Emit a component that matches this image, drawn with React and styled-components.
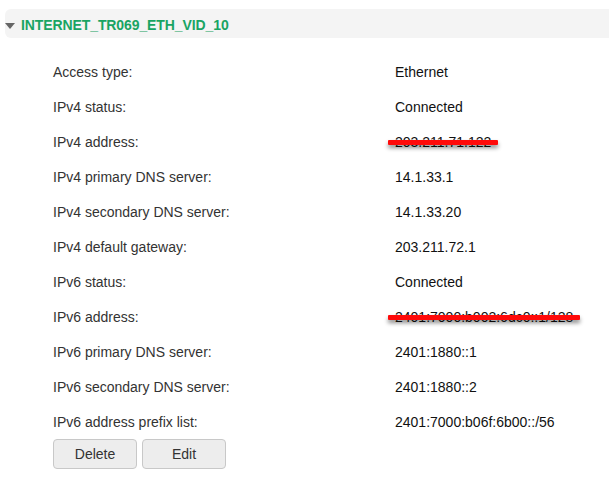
import React from 'react';
import styled, { createGlobalStyle } from 'styled-components';

const GlobalStyle = createGlobalStyle`
  body {
    margin: 0;
    background: #fff;
    font-family: "Liberation Sans", Arial, Helvetica, sans-serif;
    color: #222;
  }
`;

const rows = [
  { label: 'Access type:', value: 'Ethernet' },
  { label: 'IPv4 status:', value: 'Connected' },
  { label: 'IPv4 address:', value: '203.211.71.122', redacted: true },
  { label: 'IPv4 primary DNS server:', value: '14.1.33.1' },
  { label: 'IPv4 secondary DNS server:', value: '14.1.33.20' },
  { label: 'IPv4 default gateway:', value: '203.211.72.1' },
  { label: 'IPv6 status:', value: 'Connected' },
  { label: 'IPv6 address:', value: '2401:7000:b002:6dc0::1/128', redacted: true },
  { label: 'IPv6 primary DNS server:', value: '2401:1880::1' },
  { label: 'IPv6 secondary DNS server:', value: '2401:1880::2' },
  { label: 'IPv6 address prefix list:', value: '2401:7000:b06f:6b00::/56' },
];

function App() {
  return (
    <Page>
      <GlobalStyle />
      <Header>
        <Caret />
        <Title>INTERNET_TR069_ETH_VID_10</Title>
      </Header>
      <Details>
        {rows.map((row) => (
          <Row key={row.label}>
            <Label>{row.label}</Label>
            <Value $redacted={row.redacted}>{row.value}</Value>
          </Row>
        ))}
        <Actions>
          <Button>Delete</Button>
          <Button>Edit</Button>
        </Actions>
      </Details>
    </Page>
  );
}

export default App;

const Page = styled.div`
  width: 609px;
  height: 479px;
  overflow: hidden;
  padding-top: 9px;
  box-sizing: border-box;
`;

const Header = styled.div`
  margin-left: 5px;
  height: 29px;
  background: #f4f4f4;
  border-radius: 6px 0 0 6px;
  display: flex;
  align-items: center;
`;

const Caret = styled.span`
  width: 0;
  height: 0;
  border-left: 5.5px solid transparent;
  border-right: 5.5px solid transparent;
  border-top: 6px solid #666;
  margin: 4px 6px 0 0;
`;

const Title = styled.span`
  font-size: 14px;
  font-weight: bold;
  color: #19a463;
  letter-spacing: -0.1px;
  padding-top: 2px;
`;

const Details = styled.div`
  padding: 16px 0 0 53px;
`;

const Row = styled.div`
  display: grid;
  grid-template-columns: 342px 1fr;
  height: 35px;
  align-items: center;
  font-size: 14px;
`;

const Label = styled.span`
  color: #333;
`;

const Value = styled.span`
  color: #111;
  position: relative;
  justify-self: start;
  ${(p) => p.$redacted && `
    &::after {
      content: '';
      position: absolute;
      left: -7px;
      right: -7px;
      top: 6px;
      height: 5px;
      background: #ff0a0a;
      border-radius: 1px;
      box-shadow: 0 3px 4px rgba(0, 0, 0, 0.45);
    }
  `}
`;

const Actions = styled.div`
  display: flex;
  gap: 5px;
`;

const Button = styled.button`
  width: 84px;
  height: 30px;
  background: #ededed;
  border: 1px solid #c8c8c8;
  border-radius: 4px;
  font-family: "Liberation Sans", Arial, sans-serif;
  font-size: 14px;
  color: #333;
  padding: 0;
`;
